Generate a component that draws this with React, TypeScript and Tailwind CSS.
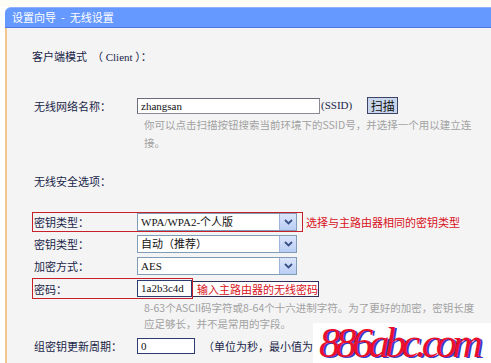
import React from "react";

const FONT = "font-['Liberation_Serif','Noto_Sans_CJK_SC',serif]";
const CJK = "font-['Noto_Sans_CJK_SC','Liberation_Sans',sans-serif]";

function Arrow() {
  return (
    <div className="w-[17px] h-full shrink-0 bg-gradient-to-b from-[#dce6fb] to-[#b9cdf4] border-l border-[#9fb6e0] flex items-center justify-center">
      <svg width="9" height="6" viewBox="0 0 9 6">
        <path d="M1 1 L4.5 4.5 L8 1" fill="none" stroke="#3a4f86" strokeWidth="1.8" />
      </svg>
    </div>
  );
}

function Select({ value }: { value: string }) {
  return (
    <div className="w-[160px] h-[18px] bg-white border border-[#7f9db9] flex items-stretch">
      <div className={`flex-1 pl-[3px] text-[11px] leading-[16px] text-[#111] ${FONT}`}>{value}</div>
      <Arrow />
    </div>
  );
}

export default function App() {
  const label = `w-[103px] shrink-0 text-[11px] leading-[14px] text-[#1a1f4a] ${CJK}`;
  return (
    <div className={`w-[491px] h-[363px] overflow-hidden bg-white relative ${CJK}`}>
      <div className="h-[7px] bg-[#fdfdf6]" />
      <div className="ml-[5px]">
        <div className="h-[21px] bg-[#6699ff] rounded-tl-[6px] border-t border-[#8fb0ff] border-b border-b-[#4f78dc] pl-[7px] flex items-center text-white text-[11px] whitespace-pre">
          设置向导  -  无线设置
        </div>
        <div className="h-[342px] bg-[#f4f4f4] border-l-2 border-[#f2c68e] pl-[25px] pt-[21px]">
          <div className={`h-[14px] text-[11px] leading-[14px] text-[#1a1f4a] whitespace-pre ${CJK}`}>
            客户端模式  <span className={FONT}>（ Client ）</span>：
          </div>

          <div className="mt-[34px] h-[17px] flex items-center pl-[2px]">
            <span className={label}>无线网络名称：</span>
            <div className={`w-[183px] h-[16px] bg-white border border-[#8a8a96] border-t-[#6a6a78] border-l-[#6a6a78] pl-[3px] text-[11px] leading-[14px] text-[#111] ${FONT}`}>
              zhangsan
            </div>
            <span className={`ml-[1px] text-[11px] text-[#1a1f4a] ${FONT}`}>(SSID)</span>
            <div className="ml-[15px] w-[31px] h-[17px] bg-[#c9d5ea] border border-[#3c4468] flex items-center justify-center text-[12px] text-[#111]">
              扫描
            </div>
          </div>

          <div className="mt-[2px] ml-[112px] text-[10.5px] leading-[18px] text-[#a2a2a2] whitespace-nowrap">
            <div>你可以点击扫描按钮搜索当前环境下的SSID号，并选择一个用以建立连</div>
            <div>接。</div>
          </div>

          <div className={`mt-[22px] pl-[2px] h-[14px] ${label}`}>无线安全选项：</div>

          <div className="mt-[24px] flex items-center">
            <div className="w-[271px] h-[20px] border border-[#c8202a] pl-[1px] flex items-center">
              <span className={label}>密钥类型：</span>
              <Select value="WPA/WPA2-个人版" />
            </div>
            <span className="ml-[3px] text-[11px] text-[#d81020]">选择与主路由器相同的密钥类型</span>
          </div>

          <div className="mt-[3px] h-[18px] flex items-center pl-[2px]">
            <span className={label}>密钥类型：</span>
            <Select value="自动（推荐）" />
          </div>

          <div className="mt-[4px] h-[18px] flex items-center pl-[2px]">
            <span className={label}>加密方式：</span>
            <Select value="AES" />
          </div>

          <div className="mt-[3px] flex items-center">
            <div className="w-[161px] h-[21px] border border-[#c8202a] pl-[1px] flex items-center">
              <span className={label}>密码：</span>
              <div className={`w-[55px] h-[17px] bg-white border border-[#2c3c70] pl-[3px] text-[11px] leading-[15px] text-[#111] ${FONT}`}>
                1a2b3c4d
              </div>
            </div>
            <div className="w-[126px] h-[16px] bg-white border border-[#30305a] border-l-0 pl-[4px] text-[11px] leading-[14px] text-[#d81020] whitespace-nowrap">
              输入主路由器的无线密码
            </div>
          </div>

          <div className="mt-[1px] ml-[112px] text-[10.5px] leading-[16px] text-[#a2a2a2] whitespace-nowrap">
            <div>8-63个ASCII码字符或8-64个十六进制字符。为了更好的加密，密钥长度</div>
            <div>应足够长，并不是常用的字段。</div>
          </div>

          <div className="mt-[6px] h-[16px] flex items-center pl-[2px]">
            <span className={label}>组密钥更新周期：</span>
            <div className={`w-[58px] h-[16px] bg-white border border-[#2c3c70] pl-[3px] text-[11px] leading-[14px] text-[#111] ${FONT}`}>
              0
            </div>
            <span className="ml-[8px] text-[11px] text-[#1a1f4a] whitespace-nowrap">（单位为秒，最小值为3</span>
          </div>
        </div>
      </div>

      <div className="absolute left-[313px] top-[323px] w-[178px] h-[40px] bg-white flex items-center pl-[6px]">
        <span className="whitespace-nowrap font-['Liberation_Serif',serif] italic text-[42px] leading-[30px] tracking-[-4.5px] text-[#e8102c] [text-shadow:2px_1px_0_#3a3ac8]">
          886abc.com
        </span>
      </div>
    </div>
  );
}
